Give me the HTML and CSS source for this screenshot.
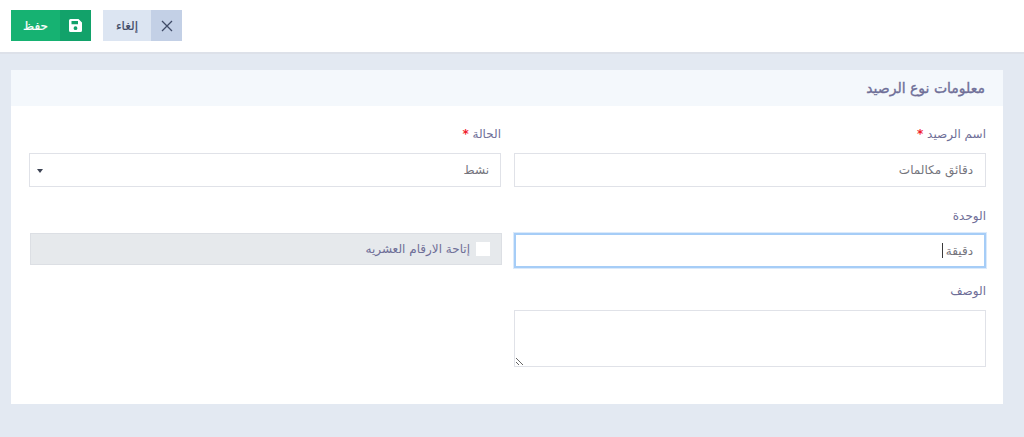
FILE: index.html
```html
<!DOCTYPE html>
<html lang="ar">
<head>
<meta charset="utf-8">
<title>معلومات نوع الرصيد</title>
<link rel="stylesheet" href="styles.css">
</head>
<body>
<header class="toolbar">
  <button class="btn btn-save" type="button">
    <span class="btn-label">حفظ</span>
    <span class="btn-icon">
      <svg width="13" height="13" viewBox="0 0 13 13"><path fill="#fff" fill-rule="evenodd" d="M1.500 0h8L13 3.500V11.500A1.500 1.500 0 0 1 11.500 13h-10A1.500 1.500 0 0 1 0 11.500v-10A1.500 1.500 0 0 1 1.500 0zM2.500 2v3.200h6.500V2zM6.500 7.300a1.900 1.900 0 1 0 0 3.800 1.900 1.900 0 0 0 0-3.800z"/></svg>
    </span>
  </button>
  <button class="btn btn-cancel" type="button">
    <span class="btn-label">إلغاء</span>
    <span class="btn-icon">
      <svg width="12" height="12" viewBox="0 0 12 12"><path stroke="#3f4a66" stroke-width="1.300" fill="none" d="M1 1l10 10M11 1L1 11"/></svg>
    </span>
  </button>
</header>
<main class="content" dir="rtl">
  <section class="card">
    <h2 class="card-title">معلومات نوع الرصيد</h2>
    <div class="form">
      <div class="field">
        <label class="label">اسم الرصيد <span class="req">*</span></label>
        <div class="control">دقائق مكالمات</div>
      </div>
      <div class="field">
        <label class="label">الحالة <span class="req">*</span></label>
        <div class="control select"><span>نشط</span><span class="arrow"></span></div>
      </div>
      <div class="field field-unit">
        <label class="label">الوحدة</label>
        <div class="control focused">دقيقة<span class="caret"></span></div>
      </div>
      <div class="field field-check">
        <div class="check-box"><span class="check"></span><span>إتاحة الارقام العشريه</span></div>
      </div>
      <div class="field field-desc">
        <label class="label">الوصف</label>
        <textarea class="area"></textarea>
      </div>
    </div>
  </section>
</main>
</body>
</html>
```
FILE: styles.css
```css
* { box-sizing: border-box; }
html, body { margin: 0; height: 100%; }
body {
  background: #e3e9f2;
  font-family: "DejaVu Sans", "Noto Sans", sans-serif;
  color: #6f6f98;
  overflow: hidden;
}
.toolbar {
  height: 54px;
  background: #fff;
  border-bottom: 2px solid #dde1e9;
  padding: 10px 11px 0;
  display: flex;
  gap: 12px;
  align-items: flex-start;
}
.btn {
  height: 31px;
  border: 0;
  padding: 0;
  display: flex;
  align-items: stretch;
  font: 400 12px "DejaVu Sans", sans-serif;
}
.btn-icon { display: flex; align-items: center; justify-content: center; width: 31px; }
.btn-label { display: flex; align-items: center; justify-content: center; flex: 1; -webkit-text-stroke: 0.2px currentColor; }
.btn-save { width: 80px; background: #16b272; color: #fff; }
.btn-save .btn-icon { background: #12a26a; }
.btn-cancel { width: 79px; background: #dce5f2; color: #3f4a66; }
.btn-cancel .btn-icon { background: #c3d0e6; }
.content { padding: 16px 21px 0 11px; }
.card { height: 334px; background: #fff; }
.card-title {
  margin: 0;
  height: 36px;
  background: #f4f8fc;
  padding: 0 18px;
  font-size: 14px;
  font-weight: 400;
  line-height: 36px;
  color: #6f6f98;
  -webkit-text-stroke: 0.35px currentColor;
}
.form {
  display: grid;
  grid-template-columns: 472px 472px;
  column-gap: 13px;
  padding: 19px 17px 0 18px;
}
.field { display: flex; flex-direction: column; }
.label { height: 28px; font-size: 12px; line-height: 18px; color: #6f6f98; }
.req { color: #f01c2e; font-weight: 700; }
.control {
  flex: none;
  height: 34px;
  border: 1px solid #e0e2e8;
  background: #fff;
  padding: 0 12px;
  font-size: 12px;
  line-height: 32px;
  color: #74747c;
  display: flex;
}
.field-unit { padding-top: 20px; }
.field-unit .label { height: 26px; }
.focused { height: 35px; border: 2px solid #a6cdf7; box-shadow: 0 0 0 1px #dbeafb; padding: 0 11px; }
.caret { width: 1px; height: 15px; background: #3a3a3a; margin: 8px 3px 0 0; }
.select { justify-content: space-between; padding: 0 11px 0 7px; }
.arrow {
  width: 0; height: 0;
  border: 3.500px solid transparent;
  border-top: 4px solid #3d4454;
  border-bottom: 0;
  margin-top: 15px;
}
.field-check { padding-top: 46px; margin-right: -1px; margin-left: 1px; }
.check-box {
  height: 32px;
  background: #e6e9ec;
  border: 1px solid #dcdfe4;
  display: flex;
  align-items: center;
  gap: 6px;
  padding-right: 11px;
  font-size: 12px;
  color: #6f6f98;
}
.check { width: 14px; height: 14px; background: #fff; }
.field-desc { grid-column: 1; padding-top: 14px; }
.area {
  display: block;
  width: 472px;
  height: 57px;
  border: 1px solid #e0e2e8;
  background: #fff;
  margin: 0;
  padding: 6px 12px;
  resize: both;
}
```
